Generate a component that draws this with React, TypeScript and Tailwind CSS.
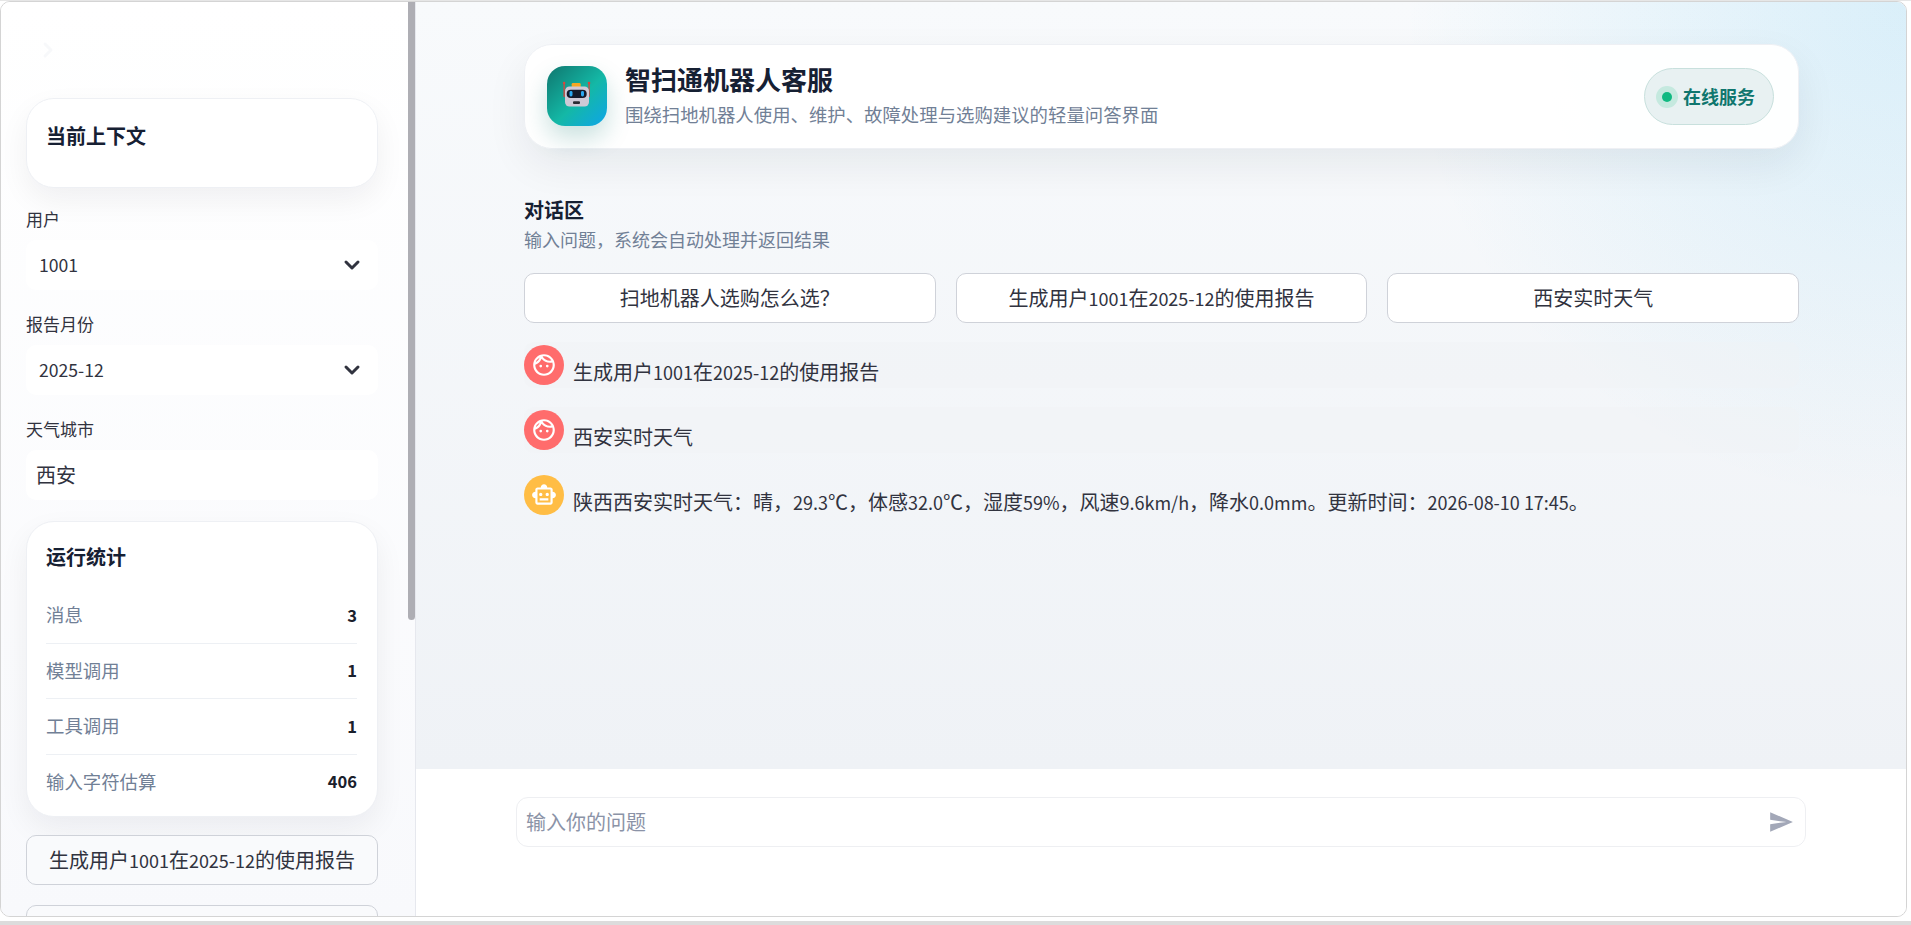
import { MdOutlineFace, MdOutlineSmartToy, MdSend } from "react-icons/md";
import { FiChevronDown, FiChevronRight } from "react-icons/fi";

const font = { fontFamily: '"Noto Sans CJK SC", "Noto Sans", sans-serif' };

function Mixed({ text }: { text: string }) {
  const parts = text.split(/([\x20-\x7E]+)/);
  return (
    <>
      {parts.map((p, i) =>
        i % 2 === 1 ? (
          <span key={i} className="text-[0.9em]">
            {p}
          </span>
        ) : (
          <span key={i}>{p}</span>
        ),
      )}
    </>
  );
}

function Robot() {
  return (
    <svg width="46" height="46" viewBox="0 0 46 46">
      <rect x="9.5" y="10" width="1.3" height="14" fill="#d9453d" />
      <rect x="34.4" y="10" width="1.3" height="14" fill="#d9453d" />
      <circle cx="10.1" cy="10" r="1.3" fill="#d9453d" />
      <circle cx="35" cy="10" r="1.3" fill="#d9453d" />
      <rect x="17.7" y="10" width="9" height="5" rx="1.2" fill="#f5a623" />
      <rect x="11" y="13.5" width="24" height="20" rx="4.5" fill="#cfc9d6" />
      <rect x="12.7" y="16.7" width="20" height="8.3" rx="4.1" fill="#141a2a" />
      <rect x="15.5" y="18" width="3" height="5.5" rx="1.4" fill="#2aa8f0" />
      <rect x="27" y="18" width="3" height="5.5" rx="1.4" fill="#2aa8f0" />
      <rect x="19" y="28.3" width="7" height="2.7" rx="1" fill="#2b2b33" />
    </svg>
  );
}

function Select({ label, value }: { label: string; value: string }) {
  return (
    <div className="flex flex-col">
      <div className="h-[29px] text-[17px] leading-[29px] text-[#31333f]">{label}</div>
      <div className="mt-[7px] flex h-[50px] items-center justify-between rounded-[10px] bg-white pl-[13px] pr-[14px] text-[17.6px] text-[#31333f]">
        <span>{value}</span>
        <FiChevronDown className="text-[#31333f]" size={24} strokeWidth={3} />
      </div>
    </div>
  );
}

function Stat({ label, value, last }: { label: string; value: string; last?: boolean }) {
  return (
    <div className={`flex items-center justify-between ${last ? "h-[54px]" : "h-[55.5px] border-b border-[#edf0f4]"}`}>
      <span className="text-[18.4px] text-[#718096]">{label}</span>
      <span className="text-[16.5px] font-bold text-[#1a202c]">{value}</span>
    </div>
  );
}

function Message({ kind, text }: { kind: "user" | "bot"; text: string }) {
  return (
    <div className={`flex h-[46px] items-center gap-[9px] rounded-[10px] ${kind === "user" ? "bg-[#f0f2f6]/40" : ""}`}>
      <div className={`flex h-[40px] w-[40px] shrink-0 items-center justify-center rounded-full text-white ${kind === "user" ? "bg-[#ff6c6c]" : "bg-[#ffbd45]"}`}>
        {kind === "user" ? <MdOutlineFace size={26} /> : <MdOutlineSmartToy size={26} />}
      </div>
      <div className="pt-[14px] text-[20px] leading-[30px] text-[#31333f]">
        <Mixed text={text} />
      </div>
    </div>
  );
}

function QuickButton({ text }: { text: string }) {
  return (
    <button className="flex h-[50px] flex-1 items-center justify-center rounded-[10px] border border-[#cfd2d9] bg-white text-[20px] text-[#31333f]">
      <Mixed text={text} />
    </button>
  );
}

export default function App() {
  return (
    <div style={font} className="flex h-[925px] w-[1911px] flex-col overflow-hidden border-t border-[#e6e6e6] bg-white pr-[4px]">
      <div className="flex h-[916px] shrink-0 overflow-hidden rounded-[10px] border border-[#d4d4d4] bg-white">
        <aside className="relative h-full w-[415px] shrink-0 overflow-hidden border-r border-[#e6e8ee] bg-gradient-to-b from-white to-[#f8f9fc]">
          <div className="absolute right-0 top-0 h-[618px] w-[7px] rounded-b-[4px] bg-[#aeaeb4]" />
          <div className="flex flex-col pl-[25px] pr-[37px]">
            <div className="flex h-[96px] items-start pl-[10px] pt-[36px]">
              <FiChevronRight className="text-[#f7f8fa]" size={24} strokeWidth={3} />
            </div>
            <div className="h-[90px] rounded-[28px] border border-[#eef0f4] bg-white pl-[19px] pr-[20px] pt-[22px] shadow-[0_12px_30px_rgba(15,23,42,0.06)]">
              <div className="text-[20px] font-bold leading-[30px] text-[#162033]">当前上下文</div>
            </div>
            <div className="mt-[16px]">
              <Select label="用户" value="1001" />
            </div>
            <div className="mt-[19px]">
              <Select label="报告月份" value="2025-12" />
            </div>
            <div className="mt-[19px]">
              <div className="h-[29px] text-[17px] leading-[29px] text-[#31333f]">天气城市</div>
              <div className="mt-[7px] flex h-[50px] items-center rounded-[10px] bg-white pl-[10px] text-[20px] text-[#31333f]">西安</div>
            </div>
            <div className="mt-[21px] h-[296px] rounded-[28px] border border-[#eef0f4] bg-white pl-[19px] pr-[20px] pt-[20px] shadow-[0_12px_30px_rgba(15,23,42,0.06)]">
              <div className="mb-[16px] text-[20px] font-bold leading-[30px] text-[#162033]">运行统计</div>
              <Stat label="消息" value="3" />
              <Stat label="模型调用" value="1" />
              <Stat label="工具调用" value="1" />
              <Stat label="输入字符估算" value="406" last />
            </div>
            <button className="mt-[18px] flex h-[50px] shrink-0 items-center justify-center rounded-[10px] border border-[#cfd2d9] bg-[#f9fafc] text-[20px] text-[#31333f]">
              <Mixed text="生成用户1001在2025-12的使用报告" />
            </button>
            <button className="mt-[20px] h-[50px] shrink-0 rounded-[10px] border border-[#cfd2d9] bg-[#f9fafc]" />
          </div>
        </aside>
        <main className="flex h-full min-w-0 flex-1 flex-col">
          <div className="h-[767px] bg-[radial-gradient(circle_at_100%_0%,rgba(14,165,233,0.13)_0,rgba(14,165,233,0)_30%),linear-gradient(180deg,#f8fafc,#eff2f6)] pl-[108px] pr-[107px] pt-[42px]">
            <div className="flex h-[105px] items-center justify-between rounded-[28px] border border-[#eef0f4] bg-white/95 pl-[22px] pr-[24px] shadow-[0_16px_40px_rgba(15,23,42,0.07)]">
              <div className="flex items-center gap-[18px]">
                <div className="mb-[2px] flex h-[60px] w-[60px] items-center justify-center rounded-[18px] bg-[linear-gradient(135deg,#0f766e,#14b8a6_55%,#0ea5e9)] shadow-[0_12px_24px_rgba(15,118,110,0.22)]">
                  <Robot />
                </div>
                <div className="flex flex-col pb-[3px]">
                  <div className="mb-[5px] text-[26px] font-bold leading-[32px] text-[#162033]">智扫通机器人客服</div>
                  <div className="text-[18.4px] leading-[28px] text-[#718096]">围绕扫地机器人使用、维护、故障处理与选购建议的轻量问答界面</div>
                </div>
              </div>
              <div className="flex h-[57px] items-center gap-[5px] rounded-full border border-[#c8e0dd] bg-[#e8f1f2] pl-[11px] pr-[18px]">
                <div className="flex h-[22px] w-[22px] items-center justify-center rounded-full bg-[#c5e9df]">
                  <div className="h-[10px] w-[10px] rounded-full bg-[#10b981]" />
                </div>
                <span className="text-[18px] font-bold text-[#0f766e]">在线服务</span>
              </div>
            </div>
            <div className="mt-[46px] text-[20px] font-bold leading-[30px] text-[#162033]">对话区</div>
            <div className="text-[18px] leading-[28px] text-[#718096]">输入问题，系统会自动处理并返回结果</div>
            <div className="mt-[20px] flex gap-[20px]">
              <QuickButton text="扫地机器人选购怎么选？" />
              <QuickButton text="生成用户1001在2025-12的使用报告" />
              <QuickButton text="西安实时天气" />
            </div>
            <div className="mt-[19px] flex flex-col gap-[19px]">
              <Message kind="user" text="生成用户1001在2025-12的使用报告" />
              <Message kind="user" text="西安实时天气" />
              <Message kind="bot" text="陕西西安实时天气：晴，29.3℃，体感32.0℃，湿度59%，风速9.6km/h，降水0.0mm。更新时间：2026-08-10 17:45。" />
            </div>
          </div>
          <div className="flex-1 bg-white pl-[100px] pr-[100px] pt-[28px]">
            <div className="flex h-[50px] items-center justify-between rounded-[12px] border border-[#eeeff2] bg-white pl-[9px] pr-[11px]">
              <span className="text-[20px] text-[#8b93a7]">输入你的问题</span>
              <MdSend size={26} className="text-[#a3a8b8]" />
            </div>
          </div>
        </main>
      </div>
      <div className="mt-[4px] h-[4px] shrink-0 -mr-[4px] bg-[#dcdcdc]" />
    </div>
  );
}
